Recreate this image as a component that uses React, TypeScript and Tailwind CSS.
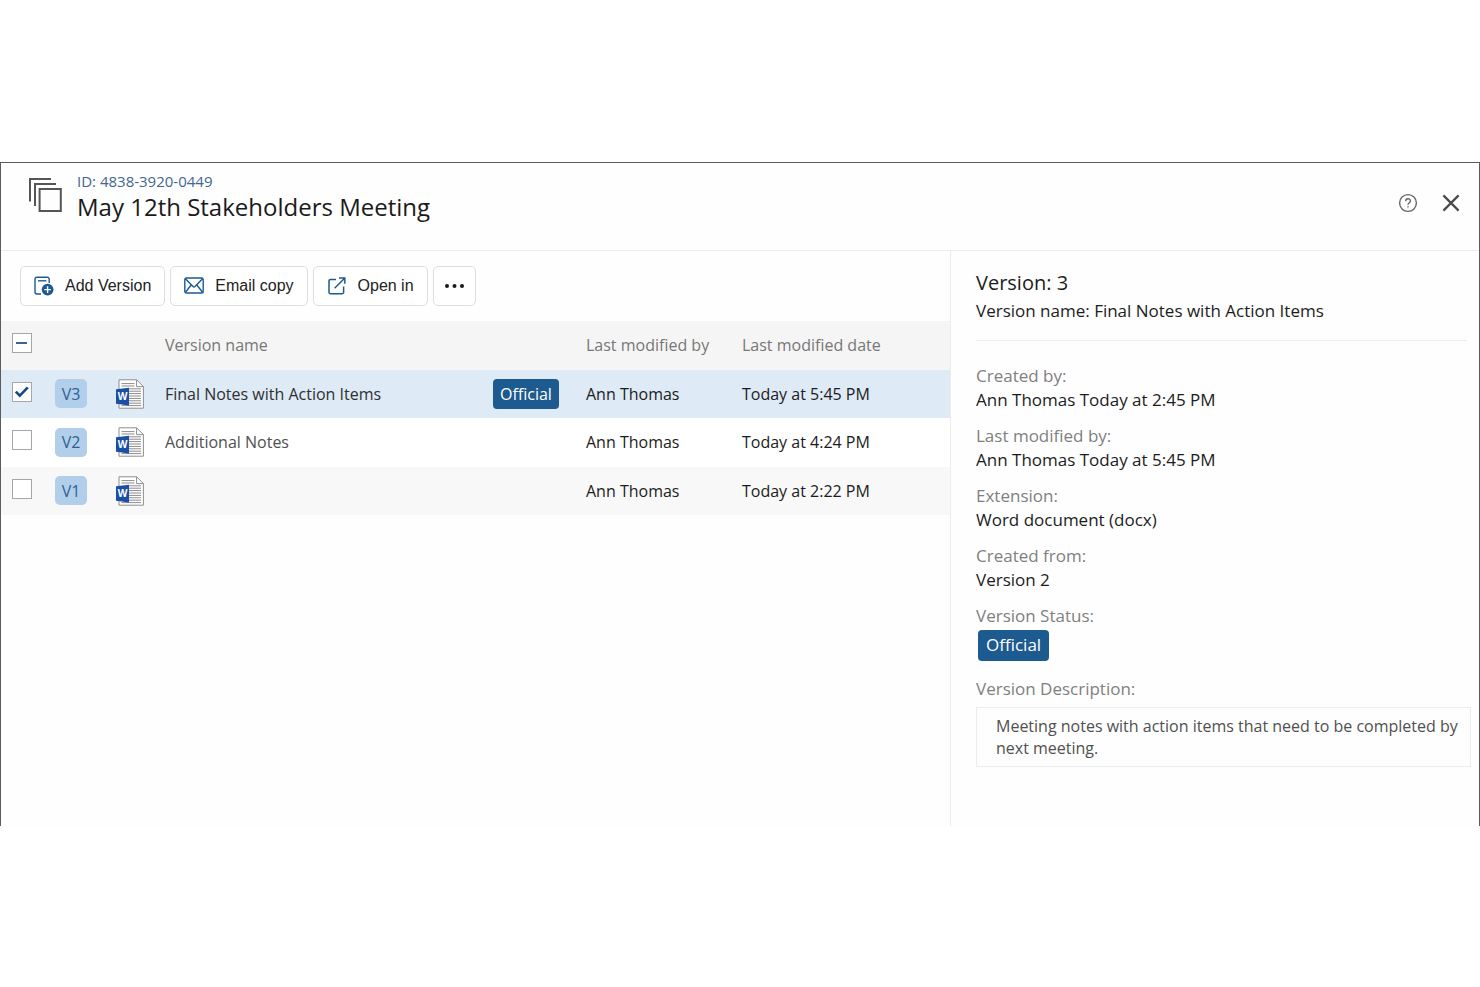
import React, { useState } from "react";

type Version = {
  id: string;
  name: string;
  official?: boolean;
  modifiedBy: string;
  modifiedDate: string;
};

const versions: Version[] = [
  { id: "V3", name: "Final Notes with Action Items", official: true, modifiedBy: "Ann Thomas", modifiedDate: "Today at 5:45 PM" },
  { id: "V2", name: "Additional Notes", modifiedBy: "Ann Thomas", modifiedDate: "Today at 4:24 PM" },
  { id: "V1", name: "", modifiedBy: "Ann Thomas", modifiedDate: "Today at 2:22 PM" },
];

function StackIcon() {
  return (
    <svg width="34" height="36" viewBox="0 0 34 36" fill="none" stroke="#555" strokeWidth="2" aria-hidden="true">
      <path d="M2 24.5V2H23" />
      <path d="M7 29V7H28" />
      <rect x="11.6" y="12" width="21.2" height="22" />
    </svg>
  );
}

function AddVersionIcon() {
  return (
    <svg width="20" height="20" viewBox="0 0 20 20" fill="none" stroke="#1d5a93" strokeWidth="1.4" aria-hidden="true">
      <path d="M15.2 7V3.2A2 2 0 0 0 13.2 1.2H3A2 2 0 0 0 1 3.2V16A2 2 0 0 0 3 18H7" />
      <path d="M4 4.8H12.4" />
      <circle cx="13.6" cy="13.6" r="5.9" fill="#1d5a93" stroke="none" />
      <path d="M13.6 10.3V16.9M10.3 13.6H16.9" stroke="#fff" />
    </svg>
  );
}

function EmailIcon() {
  return (
    <svg width="20" height="17" viewBox="0 0 20 17" fill="none" stroke="#1d5a93" strokeWidth="1.4" strokeLinejoin="round" aria-hidden="true">
      <rect x="0.8" y="1" width="18.4" height="15" rx="1.5" />
      <path d="M1.2 1.5L9 9.6Q10 10.5 11 9.6L18.8 1.5" />
      <path d="M1.2 15.5L7.2 8M18.8 15.5L12.8 8" />
    </svg>
  );
}

function OpenIcon() {
  return (
    <svg width="20" height="18" viewBox="-1 0 20 18" fill="none" stroke="#1d5a93" strokeWidth="1.5" aria-hidden="true">
      <path d="M8 2.4H2.6A1.6 1.6 0 0 0 1 4V15.2A1.6 1.6 0 0 0 2.6 16.8H14A1.6 1.6 0 0 0 15.6 15.2V9.6" />
      <path d="M6.6 11.2L16.6 1.2M11 1H16.8V6.8" />
    </svg>
  );
}

function WordIcon() {
  return (
    <svg width="28" height="30" viewBox="0 0 28 30" fill="none" aria-hidden="true">
      <path d="M3 .8H20.6L27.4 7.6V29.2H3Z" fill="#fff" stroke="#8e8e8e" />
      <path d="M20.6 .8V7.6H27.4" stroke="#8e8e8e" />
      <path
        d="M5.5 4.6H18.5M5.5 7H18.5M13 9.8H25M13 12.2H25M13 14.6H25M13 17H25M13 19.4H25M13 21.8H25M13 24.2H25M5.5 26.6H25"
        stroke="#8c8c8c"
      />
      <path d="M0 10.2L13 8.8V26.4L0 24.8Z" fill="#1b4fa5" />
      <text x="6.5" y="21" textAnchor="middle" fill="#fff" fontFamily="Open Sans, sans-serif" fontWeight="700" fontSize="10">
        W
      </text>
    </svg>
  );
}

function CheckBox(props: { label: string; checked: boolean; mixed?: boolean; onChange: () => void }) {
  return (
    <span className="mb-1 grid size-5 place-items-center">
      <input
        type="checkbox"
        aria-label={props.label}
        checked={props.checked}
        onChange={props.onChange}
        ref={(el) => {
          if (el) el.indeterminate = !!props.mixed;
        }}
        className="col-start-1 row-start-1 size-5 appearance-none border border-[#a6a6a6] bg-white"
      />
      <svg className="pointer-events-none col-start-1 row-start-1" width="20" height="20" viewBox="0 0 20 20" fill="none" aria-hidden="true">
        {props.mixed && <path d="M4 10H15" stroke="#3c6490" strokeWidth="2" />}
        {!props.mixed && props.checked && <path d="M3.8 9.6L7.8 13.6L15.8 5.4" stroke="#17497f" strokeWidth="2.6" />}
      </svg>
    </span>
  );
}

function ToolButton({ icon, children }: { icon: React.ReactNode; children: React.ReactNode }) {
  return (
    <button
      type="button"
      className="flex h-10 items-center gap-[11px] rounded-[5px] border border-[#dedede] bg-white px-[13px] font-['Liberation_Sans',sans-serif] text-base text-[#222]"
    >
      {icon}
      {children}
    </button>
  );
}

function Detail({ label, children }: { label: string; children: React.ReactNode }) {
  return (
    <div className="mb-3">
      <dt className="text-[#808080]">{label}</dt>
      <dd>{children}</dd>
    </div>
  );
}

export default function App() {
  const [selected, setSelected] = useState<string[]>(["V3"]);
  const toggle = (id: string) =>
    setSelected((s) => (s.includes(id) ? s.filter((v) => v !== id) : [...s, id]));
  const all = selected.length === versions.length;

  return (
    <div className="flex min-h-screen flex-col justify-center bg-white font-['Open_Sans',sans-serif] text-[#1c1c1c]">
      <main className="flex flex-col border-x border-t border-[#5c5c5c] bg-[#fefefe]">
        <header className="flex h-[88px] items-start border-b border-[#ececec] pl-[27px] pr-[19px]">
          <span className="pt-[14px]">
            <StackIcon />
          </span>
          <div className="flex-1 pl-[15px] pt-2">
            <p className="text-[15px] leading-5 text-[#41668f]">ID: 4838-3920-0449</p>
            <h1 className="text-2xl leading-8 text-[#1a1a1a]">May 12th Stakeholders Meeting</h1>
          </div>
          <div className="flex items-center gap-6 pt-[30px]">
            <button type="button" aria-label="Help">
              <svg width="20" height="20" viewBox="0 0 20 20" fill="none" stroke="#666" strokeWidth="1.4" aria-hidden="true">
                <circle cx="10" cy="10" r="8.4" />
                <path d="M7.7 8.2C7.7 5 12.4 5 12.4 7.9C12.4 9.7 10 9.8 10 11.8M10 13.2V14.6" />
              </svg>
            </button>
            <button type="button" aria-label="Close">
              <svg width="18" height="18" viewBox="0 0 18 18" fill="none" stroke="#4a4a4a" strokeWidth="2.2" aria-hidden="true">
                <path d="M1.4 1.4L16.6 16.6M16.6 1.4L1.4 16.6" />
              </svg>
            </button>
          </div>
        </header>

        <div className="grid grid-cols-[minmax(0,1fr)_529px]">
          <section>
            <div className="flex gap-[5px] pb-[15px] pl-[19px] pt-[15px]">
              <ToolButton icon={<AddVersionIcon />}>Add Version</ToolButton>
              <ToolButton icon={<EmailIcon />}>Email copy</ToolButton>
              <ToolButton icon={<OpenIcon />}>Open in</ToolButton>
              <button
                type="button"
                aria-label="More actions"
                className="flex h-10 items-center rounded-[5px] border border-[#dedede] bg-white px-[11px]"
              >
                <svg width="19" height="4" viewBox="0 0 19 4" fill="#1a1a1a" aria-hidden="true">
                  <circle cx="2" cy="2" r="2" />
                  <circle cx="9.5" cy="2" r="2" />
                  <circle cx="17" cy="2" r="2" />
                </svg>
              </button>
            </div>

            <table className="w-full table-fixed text-left text-base">
              <colgroup>
                <col className="w-[54px]" />
                <col className="w-[61px]" />
                <col className="w-[49px]" />
                <col />
                <col className="w-[93px]" />
                <col className="w-[156px]" />
                <col className="w-[208px]" />
              </colgroup>
              <thead>
                <tr className="h-[49px] bg-[#f5f5f5] text-[#777]">
                  <th className="pl-[11px]">
                    <CheckBox
                      label="Select all versions"
                      checked={all}
                      mixed={selected.length > 0 && !all}
                      onChange={() => setSelected(all ? [] : versions.map((v) => v.id))}
                    />
                  </th>
                  <td />
                  <td />
                  <th className="font-normal">Version name</th>
                  <td />
                  <th className="font-normal">Last modified by</th>
                  <th className="font-normal">Last modified date</th>
                </tr>
              </thead>
              <tbody>
                {versions.map((v) => {
                  const on = selected.includes(v.id);
                  return (
                    <tr key={v.id} className={on ? "h-12 bg-[#deeaf6]" : "h-12 bg-white last:bg-[#f8f8f8] even:h-[49px]"}>
                      <td className="pl-[11px]">
                        <CheckBox label={"Select " + v.id} checked={on} onChange={() => toggle(v.id)} />
                      </td>
                      <td>
                        <span className="flex h-[29px] w-8 items-center justify-center rounded-[5px] bg-[#b1cfea] text-[#2f5f93]">{v.id}</span>
                      </td>
                      <td>
                        <WordIcon />
                      </td>
                      <td className={on ? "text-[#303030]" : "text-[#505050]"}>{v.name}</td>
                      <td>
                        {v.official && (
                          <span className="inline-flex h-[30px] items-center rounded bg-[#1d5a8f] px-[7px] font-medium text-white">
                            Official
                          </span>
                        )}
                      </td>
                      <td>{v.modifiedBy}</td>
                      <td>{v.modifiedDate}</td>
                    </tr>
                  );
                })}
              </tbody>
            </table>
          </section>

          <aside className="border-l border-[#ececec] pb-[59px] pl-[25px] pr-2 pt-[18px]">
            <h2 className="text-xl leading-7">Version: 3</h2>
            <p className="text-[17px] leading-7">Version name: Final Notes with Action Items</p>
            <hr className="mb-[23px] mr-1 mt-[15px] border-[#ececec]" />
            <dl className="text-[17px] leading-6">
              <Detail label="Created by:">Ann Thomas Today at 2:45 PM</Detail>
              <Detail label="Last modified by:">Ann Thomas Today at 5:45 PM</Detail>
              <Detail label="Extension:">Word document (docx)</Detail>
              <Detail label="Created from:">Version 2</Detail>
              <div className="mb-4">
                <dt className="text-[#808080]">Version Status:</dt>
                <dd className="flex pl-[2px] pt-[2px]">
                  <span className="inline-flex h-[31px] items-center rounded bg-[#1d5a8f] px-2 font-medium text-white">Official</span>
                </dd>
              </div>
              <div>
                <dt className="text-[#808080]">Version Description:</dt>
                <dd className="mt-[6px] border border-[#ececec] py-[7px] pl-[19px] pr-2 text-base leading-[22px] text-[#505050]">
                  Meeting notes with action items that need to be completed by next meeting.
                </dd>
              </div>
            </dl>
          </aside>
        </div>
      </main>
    </div>
  );
}
